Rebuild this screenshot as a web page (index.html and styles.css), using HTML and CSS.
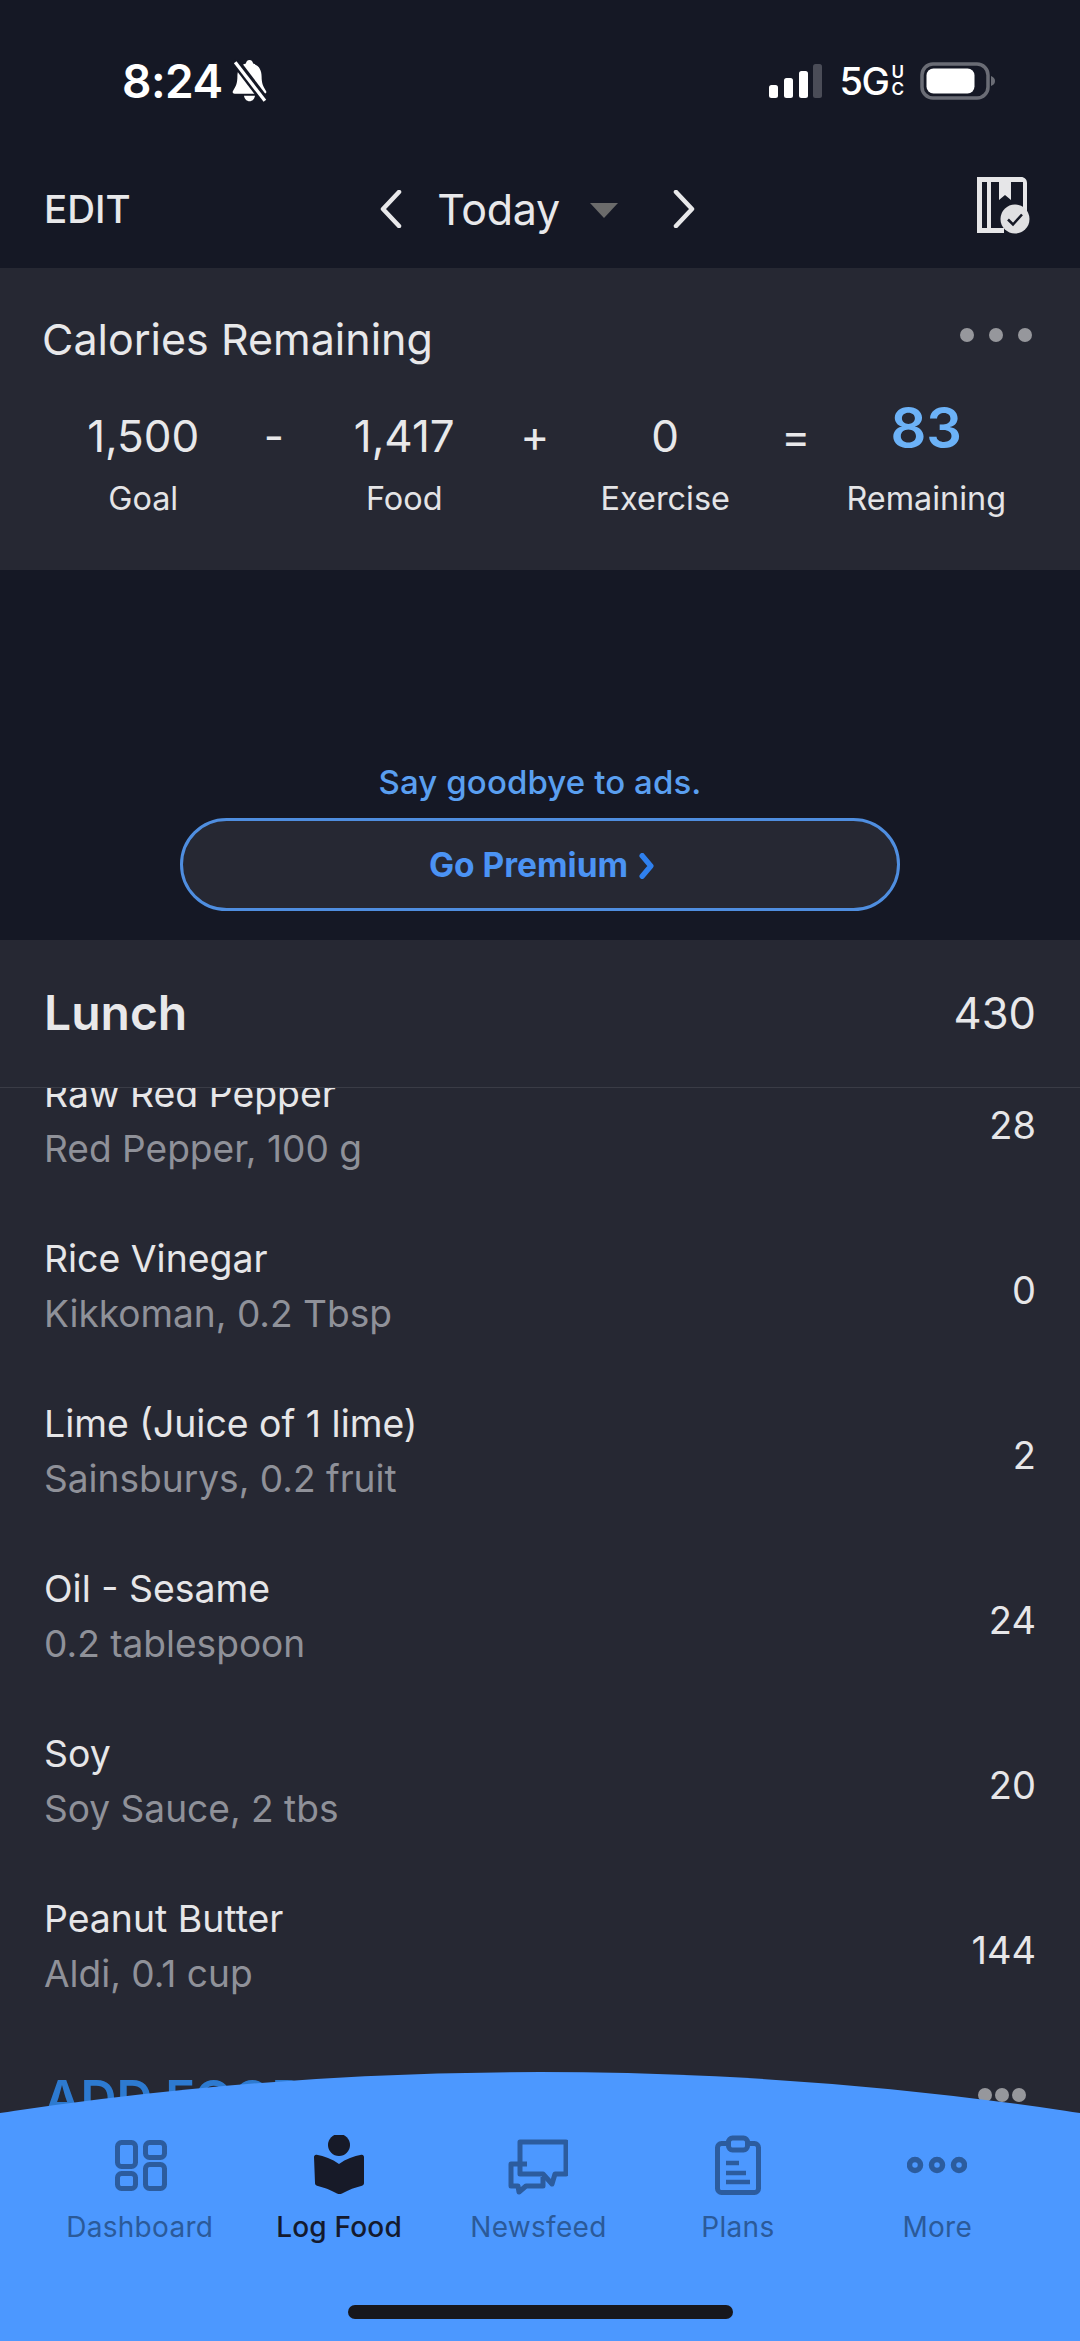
FILE: index.html
```html
<!DOCTYPE html>
<html lang="en">
<head>
<meta charset="utf-8">
<title>Diary</title>
<link rel="stylesheet" href="styles.css">
</head>
<body>
<div class="screen">
  <header class="top">
    <div class="status">
      <div class="status-left">
        <span class="time">8:24</span>
        <svg class="bell" viewBox="0 0 36 40"><path d="M18 1c2 0 3 1.500 3.300 3.200C27 5.800 29 10.500 29 16c0 6 1.500 9.500 4 13 .8 1.200 0 2.500-1.500 2.500H4.500C3 31.500 2.200 30.200 3 29c2.500-3.500 4-7 4-13 0-5.500 2-10.200 7.700-11.800C15 2.500 16 1 18 1z" fill="#fff"/><path d="M13 33.500h10c-.5 3-2.500 5-5 5s-4.500-2-5-5z" fill="#fff"/><path d="M4 1l29 38" stroke="#151825" stroke-width="8"/><path d="M5 3l27 35" stroke="#fff" stroke-width="3"/></svg>
      </div>
      <div class="status-right">
        <svg class="signal" viewBox="0 0 54 34"><rect x="0" y="21" width="9" height="13" rx="2.500" fill="#fff"/><rect x="15" y="14" width="9" height="20" rx="2.500" fill="#fff"/><rect x="30" y="7" width="9" height="27" rx="2.500" fill="#fff"/><rect x="44" y="0" width="9" height="34" rx="2.500" fill="#4a4c57"/></svg>
        <span class="net">5G<span class="net-sub"><span>U</span><span>C</span></span></span>
        <svg class="battery" viewBox="0 0 76 38"><rect x="2" y="2" width="66" height="34" rx="11" fill="none" stroke="#6a6c75" stroke-width="3.500"/><rect x="6.500" y="6.500" width="48" height="25" rx="7" fill="#fff"/><path d="M71 14c3 1 4 3 4 5s-1 4-4 5z" fill="#6a6c75"/></svg>
      </div>
    </div>
    <nav class="nav">
      <span class="edit">EDIT</span>
      <div class="date">
        <svg class="chev" viewBox="0 0 24 38"><path d="M20 2L4 19l16 17" fill="none" stroke="#e8e8ea" stroke-width="4.500" stroke-linecap="round" stroke-linejoin="round"/></svg>
        <span class="today">Today</span>
        <span class="caret"></span>
        <svg class="chev" viewBox="0 0 24 38"><path d="M4 2l16 17L4 36" fill="none" stroke="#e8e8ea" stroke-width="4.500" stroke-linecap="round" stroke-linejoin="round"/></svg>
      </div>
      <svg class="planner" viewBox="0 0 54 58"><path d="M0 0h44c3.500 0 6 2.500 6 6v28h-4V5H5v46h22v5H0z" fill="#e6e6e8"/><path d="M10 5h4v46h-4z" fill="#e6e6e8"/><path d="M22 4h12v19l-6-5-6 5z" fill="#e6e6e8"/><circle cx="38" cy="42" r="14.500" fill="#e0e0e2"/><path d="M31 42.500l5 5 9-10" fill="none" stroke="#151825" stroke-width="2.500"/></svg>
    </nav>
  </header>

  <section class="summary">
    <div class="summary-head">
      <h2 class="summary-title">Calories Remaining</h2>
      <div class="dots"><i></i><i></i><i></i></div>
    </div>
    <div class="calc">
      <div class="cell"><span class="val">1,500</span><span class="lab">Goal</span></div>
      <span class="op">-</span>
      <div class="cell"><span class="val">1,417</span><span class="lab">Food</span></div>
      <span class="op">+</span>
      <div class="cell"><span class="val">0</span><span class="lab">Exercise</span></div>
      <span class="op">=</span>
      <div class="cell"><span class="val val-big">83</span><span class="lab">Remaining</span></div>
    </div>
  </section>

  <section class="promo">
    <p class="promo-text">Say goodbye to ads.</p>
    <div class="premium">Go Premium
      <svg class="premium-chev" viewBox="0 0 14 24"><path d="M3 2.500l8 9.500-8 9.500" fill="none" stroke="#2f80ee" stroke-width="5" stroke-linecap="round" stroke-linejoin="round"/></svg>
    </div>
  </section>

  <section class="meal">
    <div class="meal-head"><h2 class="meal-name">Lunch</h2><span class="meal-total">430</span></div>
    <div class="meal-list">
      <div class="list-inner">
        <div class="row"><div class="info"><div class="food">Raw Red Pepper</div><div class="sub">Red Pepper, 100 g</div></div><span class="cal">28</span></div>
        <div class="row"><div class="info"><div class="food">Rice Vinegar</div><div class="sub">Kikkoman, 0.2 Tbsp</div></div><span class="cal">0</span></div>
        <div class="row"><div class="info"><div class="food">Lime (Juice of 1 lime)</div><div class="sub">Sainsburys, 0.2 fruit</div></div><span class="cal">2</span></div>
        <div class="row"><div class="info"><div class="food">Oil - Sesame</div><div class="sub">0.2 tablespoon</div></div><span class="cal">24</span></div>
        <div class="row"><div class="info"><div class="food">Soy</div><div class="sub">Soy Sauce, 2 tbs</div></div><span class="cal">20</span></div>
        <div class="row"><div class="info"><div class="food">Peanut Butter</div><div class="sub">Aldi, 0.1 cup</div></div><span class="cal">144</span></div>
        <div class="add-row"><span class="add">ADD FOOD</span><div class="add-dots"><i></i><i></i><i></i></div></div>
      </div>
    </div>
  </section>

  <footer class="tabbar">
    <div class="tabs">
      <div class="tab">
        <svg class="tab-icon" viewBox="0 0 60 60"><g fill="none" stroke="#2c5c9e" stroke-width="5"><rect x="7.500" y="7.500" width="18" height="24" rx="4"/><rect x="35.500" y="7.500" width="19" height="15" rx="4"/><rect x="7.500" y="38.500" width="18" height="15" rx="4"/><rect x="35.500" y="29.500" width="19" height="24" rx="4"/></g></svg>
        <span class="tab-label">Dashboard</span>
      </div>
      <div class="tab tab-active">
        <svg class="tab-icon" viewBox="0 0 60 60"><circle cx="30" cy="10" r="11" fill="#171a28"/><path d="M5 22c0-1.500 1.200-2.600 2.700-2.200C15 21 23 24 30 29c7-5 15-8 22.300-9.200 1.500-.4 2.700.7 2.700 2.200v26c0 1.500-.8 2.300-2 2.700-7 1.700-13 4-20 7.700-1.700.9-3.300.9-5 0-7-3.700-13-6-20-7.700-1.200-.4-2-1.200-2-2.700z" fill="#171a28"/></svg>
        <span class="tab-label">Log Food</span>
      </div>
      <div class="tab">
        <svg class="tab-icon" viewBox="0 0 60 60"><g fill="none" stroke="#2c5c9e" stroke-width="5" stroke-linejoin="round"><path d="M12 7h46v32H47l-3 10-9-10H12z"/><path d="M19 29H3v22h7l1 6 7-6h17v-9"/></g></svg>
        <span class="tab-label">Newsfeed</span>
      </div>
      <div class="tab">
        <svg class="tab-icon" viewBox="0 0 60 60"><g fill="none" stroke="#2c5c9e"><rect x="9.500" y="8.500" width="41" height="49" rx="4" stroke-width="5"/><rect x="20.500" y="3" width="19" height="12" rx="4" stroke-width="5" fill="#4c98ff"/><path d="M18 28h13M18 38h20M18 47h24" stroke-width="4.500"/></g></svg>
        <span class="tab-label">Plans</span>
      </div>
      <div class="tab">
        <svg class="tab-icon" viewBox="0 0 60 60"><g fill="none" stroke="#2c5c9e" stroke-width="5.500"><circle cx="8" cy="30" r="5.500"/><circle cx="30" cy="30" r="5.500"/><circle cx="52" cy="30" r="5.500"/></g></svg>
        <span class="tab-label">More</span>
      </div>
    </div>
    <div class="home-indicator"></div>
  </footer>
</div>
</body>
</html>
```

FILE: styles.css
```css
* { box-sizing: border-box; }
html, body { margin: 0; padding: 0; background: #151825; }
body { font-family: Inter, "Noto Sans", "Liberation Sans", sans-serif; }
h2, p { margin: 0; font-weight: inherit; font-size: inherit; }

.screen {
  position: relative;
  width: 1080px;
  height: 2341px;
  overflow: hidden;
  display: flex;
  flex-direction: column;
  background: #151825;
}

/* header */
.top { height: 268px; flex: none; }
.status {
  height: 150px;
  padding: 58px 84px 0 122px;
  display: flex;
  justify-content: space-between;
  align-items: flex-start;
}
.status-left { display: flex; align-items: center; gap: 6px; }
.time { color: #fff; font-size: 46px; font-weight: 600; line-height: 46px; letter-spacing: -0.5px; }
.bell { width: 41px; height: 44px; }
.status-right { display: flex; align-items: center; gap: 18px; height: 46px; }
.signal { width: 54px; height: 34px; margin-right: -1px; }
.net { display: flex; align-items: center; color: #fff; font-size: 38px; font-weight: 500; letter-spacing: -1.5px; line-height: 36px; }
.net-sub { display: flex; flex-direction: column; font-size: 17px; line-height: 17px; font-weight: 600; margin-left: 3px; letter-spacing: 0; }
.battery { width: 76px; height: 38px; margin-left: -2px; }

.nav {
  display: grid;
  grid-template-columns: 1fr auto 1fr;
  align-items: center;
  padding: 0 49px 0 44px;
  height: 118px;
}
.edit { color: #e8e8ea; font-size: 38.5px; font-weight: 500; }
.date { display: flex; align-items: center; }
.chev { width: 24px; height: 38px; }
.today { color: #e8e8ea; font-size: 43px; margin-left: 34px; line-height: 50px; letter-spacing: -0.3px; }
.caret {
  width: 0;
  height: 0;
  margin: 2px 54px 0 30px;
  border-left: 14px solid transparent;
  border-right: 14px solid transparent;
  border-top: 15px solid #6b6b6b;
}
.planner { width: 54px; height: 58px; justify-self: end; margin-top: -6px; }

/* summary */
.summary { height: 302px; flex: none; background: #262833; padding: 42px 47px 0 42px; }
.summary-head { display: flex; justify-content: space-between; align-items: flex-start; }
.summary-title { color: #e8e8ea; font-size: 43px; line-height: 58px; }
.dots { display: flex; gap: 15px; margin-top: 18px; margin-right: 1px; }
.dots i { width: 14px; height: 14px; border-radius: 50%; background: #96979c; }
.calc {
  display: grid;
  grid-template-columns: repeat(7, 130.5px);
  margin: 40px 0 0 36px;
}
.cell { display: flex; flex-direction: column; align-items: center; justify-self: center; width: 130px; }
.val { color: #e8e8ea; font-size: 44px; line-height: 56px; white-space: nowrap; }
.val-big { color: #6cb2f7; font-size: 56px; font-weight: 600; line-height: 56px; margin-top: -8px; margin-bottom: 8px; }
.lab { color: #e4e4e6; font-size: 32.4px; line-height: 40px; margin-top: 15px; white-space: nowrap; }
.op { color: #e8e8ea; font-size: 44px; line-height: 56px; text-align: center; }

/* promo */
.promo { height: 370px; flex: none; padding-top: 193px; display: flex; flex-direction: column; align-items: center; }
.promo-text { color: #5a9ff0; font-size: 33px; font-weight: 500; line-height: 38px; letter-spacing: 0.1px; }
.premium {
  width: 720px;
  height: 93px;
  margin-top: 17px;
  margin-left: -1px;
  border: 3px solid #4f8ee0;
  border-radius: 47px;
  background: #262833;
  display: flex;
  align-items: center;
  justify-content: center;
  gap: 10px;
  padding-left: 5px;
  color: #4b93f4;
  font-size: 33.5px;
  font-weight: 700;
}
.premium-chev { width: 17px; height: 26px; margin-top: 3px; }

/* meal */
.meal { flex: 1; min-height: 0; background: #262833; display: flex; flex-direction: column; }
.meal-head {
  height: 148px;
  flex: none;
  padding: 0 44px 2px;
  border-bottom: 1px solid #3a3c46;
  display: flex;
  justify-content: space-between;
  align-items: center;
}
.meal-name { color: #e8e8ea; font-size: 48px; font-weight: 600; }
.meal-total { color: #e8e8ea; font-size: 43.5px; }
.meal-list { flex: 1; overflow: hidden; }
.list-inner { margin-top: -50px; }
.row {
  height: 165px;
  padding: 0 44px;
  display: flex;
  justify-content: space-between;
  align-items: center;
}
.food { color: #e6e6e8; font-size: 37.4px; line-height: 55px; }
.sub { color: #8f9199; font-size: 37.1px; line-height: 55px; }
.cal { color: #e6e6e8; font-size: 38px; padding-top: 8px; }
.add-row {
  padding: 40px 44px 0;
  display: flex;
  justify-content: space-between;
}
.add { color: #2d7ad0; font-size: 50px; font-weight: 600; line-height: 60px; }
.add-dots { display: flex; gap: 3px; margin: 20px 10px 0 0; }
.add-dots i { width: 14px; height: 14px; border-radius: 50%; background: #96979c; }

/* tab bar */
.tabbar {
  position: absolute;
  left: 0;
  right: 0;
  bottom: 0;
  height: 269px;
  background: #4c98ff;
  clip-path: circle(3577px at 50% 3577px);
  padding: 63px 43px 0 40px;
}
.tabs { display: grid; grid-template-columns: repeat(5, 1fr); }
.tab { display: flex; flex-direction: column; align-items: center; }
.tab-icon { width: 60px; height: 60px; }
.tab-label { color: #2b5a99; font-size: 28px; line-height: 36px; margin-top: 14px; letter-spacing: 0.3px; }
.tab-active .tab-label { color: #141a2e; font-weight: 500; letter-spacing: 0.2px; }
.home-indicator {
  position: absolute;
  left: 348px;
  top: 233px;
  width: 385px;
  height: 14px;
  border-radius: 7px;
  background: #17171c;
}
```
